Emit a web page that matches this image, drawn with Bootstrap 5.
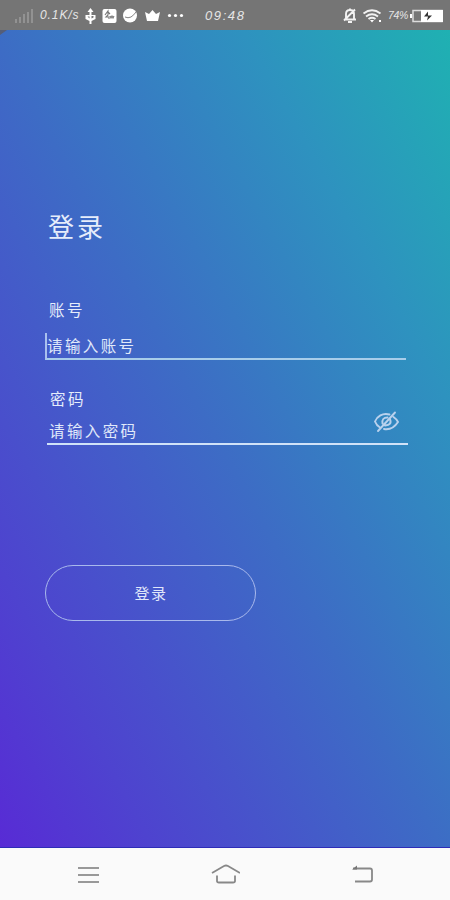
<!DOCTYPE html>
<html lang="zh-CN">
<head>
<meta charset="utf-8">
<meta name="viewport" content="width=device-width, initial-scale=1">
<title>登录</title>
<link href="https://cdn.jsdelivr.net/npm/bootstrap@5.3.0/dist/css/bootstrap.min.css" rel="stylesheet">
<style>
body{font-family:"Liberation Sans","Noto Sans CJK SC",sans-serif;color:#e6edfb}
.screen{height:900px;overflow:hidden;background:#fafafa}
.status{height:30px;background:#757575;color:#e6e6e6;padding:1px 7px 0 15px;font:italic 12px/29px "Liberation Sans",sans-serif}
.status svg,.keys svg,.eye svg{display:block;flex:none}
.speed{width:41px;margin-left:6px;letter-spacing:.9px;white-space:nowrap}
.clock{width:42px;margin-left:21px;letter-spacing:1.6px;font-size:13px;white-space:nowrap}
.pct{width:22px;font-size:10.5px;margin-left:5px;letter-spacing:-.4px;white-space:nowrap}
.login{height:818px;padding:178px 42px 0 45px;background:linear-gradient(to top right,#582bd5,#4e43cf 17%,#3d6cc5 49%,#2e92bf 77%,#1fb1b2);border-bottom:1px solid #2d2cb8;position:relative}
.corner{position:absolute;left:0;top:0;border-top:5px solid #555e78;border-right:7px solid transparent}
h1{font-size:26px;line-height:40px;font-weight:400;letter-spacing:3px;margin:0 0 0 3px}
.account{margin-top:53px;width:361px}
.secret{margin:30px 0 0 2px;width:361px}
.form-label{font-size:15.5px;line-height:20px;letter-spacing:2.5px;margin:0 0 0 4px;display:block}
.secret .form-label{margin-left:3px}
.form-control.line{height:26px;padding:0 0 1px 2px;border:0;border-radius:0;background:transparent;color:#e6edfb;font-size:15.5px;line-height:24px;letter-spacing:2.4px;box-shadow:none}
.line::placeholder{color:#e0e9fa;opacity:1}
.account .field{margin-top:12px;border-bottom:2px solid #a8cdea;border-left:2px solid #a9c0ee;height:27px}
.account .line{padding:1px 0 0}
.secret .field{margin-top:8px;border-bottom:2px solid #d0e2f8;height:27px}
.secret .line{height:28px;padding-top:0}
.eye{margin:-8px 8px 0 0;background:none;border:0;padding:0}
.enter{width:211px;height:56px;margin-top:120px;border:1px solid #a9b9ec;color:#e0e6fa;font-size:15px;letter-spacing:1.5px;padding:3px 0 0 1px}
.keys{height:52px;padding:0 76px 0 77px}
</style>
</head>
<body>
<div class="screen">
  <header class="status d-flex align-items-center">
    <svg width="19" height="16" fill="#929292"><path d="M0 11h2v4H0zM4 9h2v6H4zM8 6h2v9H8zM12 4h2v11h-2zM16 1h2v14h-2z"/></svg>
    <span class="speed">0.1K/s</span>
    <svg width="103" height="18" viewBox="81 7 103 18" fill="#fff">
      <path d="M90.500 8l3 4h-2v3h4v4l-4 2v3h-2v-3l-4-2v-4h4v-3h-2z"/><path d="M87.500 16.500l2 2v-2zM91.500 18.500l2-1v-1.500h-2z" fill="#757575"/>
      <rect x="102.500" y="9" width="14" height="14" rx="2"/><path d="M105 15l3-4v4l-2 2h3v2M108 12l2 2M110 16l1 2 1-2 1 2 1-2" stroke="#777" stroke-width="1.100" fill="none"/>
      <circle cx="130" cy="15.500" r="7"/><path d="M125 17q3 1.500 6 0 3-2 5-5" fill="none" stroke="#858585"/>
      <path d="M145 12l4 2 3.500-4 3.500 4 4-2-2 9h-11z"/>
      <circle cx="169.500" cy="15.500" r="1.600"/><circle cx="175.500" cy="15.500" r="1.600"/><circle cx="181.500" cy="15.500" r="1.600"/>
    </svg>
    <span class="clock">09:48</span>
    <svg class="ms-auto" width="40" height="18" viewBox="343 7 40 18" fill="none" stroke="#f2f2f2" stroke-width="1.900">
      <path d="M344 19.500h12M346 19v-5q0-4 4-4 4 0 4 4v5M344 20.500l11-11M348 22h4M350 10V8.500"/>
      <path d="M363.500 13.500q8.500-6.500 17 0M366 16.500q6-4.500 12 0M368.500 19q3.500-2.500 7 0"/><path d="M370 20h4l-2 2.500zM379 20h2v2h-2z" fill="#fff" stroke="none"/>
    </svg>
    <span class="pct">74%</span>
    <svg width="33" height="14"><path d="M0 5h2v4H0z" fill="#fff"/><rect x="3" y="1.500" width="29" height="11" fill="#777" stroke="#ddd" stroke-width="1.500"/><path d="M11 1h22v12H11z" fill="#fff"/><path d="M18 2.500l-4 5h4l-1 4 5-5h-4z" fill="#333"/></svg>
  </header>
  <main class="login">
    <span class="corner"></span>
    <h1>登录</h1>
    <form>
      <div class="account">
        <label class="form-label" for="account">账号</label>
        <div class="field"><input class="form-control line" id="account" placeholder="请输入账号"></div>
      </div>
      <div class="secret">
        <label class="form-label" for="secret">密码</label>
        <div class="field d-flex align-items-start">
          <input class="form-control line" type="password" id="secret" placeholder="请输入密码">
          <button class="eye" type="button" aria-label="显示密码"><svg width="27" height="24" viewBox="0 0 27 24" fill="none" stroke="#b9d1ed" stroke-width="1.900" stroke-linecap="round"><path d="M16.500 4.500C9.500 2.500 4 6.500 2 11.500q1.500 4 5 6M20.500 7q3 2 4.500 5-5.500 8.500-14 7M17 9q2.500 6-5 6.500M14.500 7.500q-6 0-5 6M22 2.500L5 21"/></svg></button>
        </div>
      </div>
      <button class="btn enter rounded-pill" type="button">登录</button>
    </form>
  </main>
  <nav class="keys d-flex align-items-center justify-content-between">
    <svg width="22" height="20" stroke="#999" stroke-width="2"><path d="M1 4h21M1 11h21M1 18h21"/></svg>
    <svg width="30" height="22" viewBox="0 0 30 22" fill="none" stroke="#888" stroke-width="1.800"><path d="M2 10L14 3q2-1 4 0l12 7M7 12.500V18q0 1.500 2 1.500h14q2 0 2-1.500v-5.500"/></svg>
    <svg width="23" height="20" viewBox="0 0 23 20" fill="none" stroke="#888" stroke-width="1.800"><path d="M2 4.500h17q2 0 2 2v9q0 2-2 2H4"/><path d="M1 5.500l5-4v4z" fill="#777" stroke="none"/></svg>
  </nav>
</div>
<script src="https://cdn.jsdelivr.net/npm/bootstrap@5.3.0/dist/js/bootstrap.bundle.min.js"></script>
</body>
</html>
